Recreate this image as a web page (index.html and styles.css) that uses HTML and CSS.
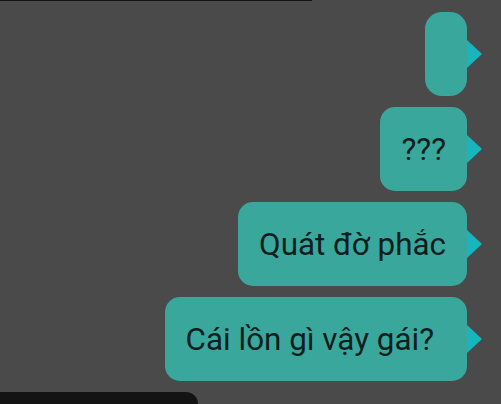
FILE: index.html
```html
<!DOCTYPE html>
<html lang="vi">
<head>
  <meta charset="UTF-8" />
  <meta name="viewport" content="width=device-width, initial-scale=1.0"/>
  <title>Chat</title>
  <link rel="stylesheet" href="styles.css">
</head>
<body>
  <div class="top-bar"></div>
  <div class="thread">
    <div class="bubble out empty"></div>
    <div class="bubble out">???</div>
    <div class="bubble out">Quát đờ phắc</div>
    <div class="bubble out wide">Cái lồn gì vậy gái?</div>
    <div class="bubble in"></div>
  </div>
</body>
</html>
```

FILE: styles.css
```css
:root {
  --bg: #4a4a4a;
  --teal: #3aa79d;
  --tail: #17b6bf;
  --ink: #0f1e1d;
  --dark: #131313;
}
*{margin:0;padding:0;box-sizing:border-box;}
html, body {height:100%; overflow:hidden;}
body {background: var(--bg); font-family: Roboto, 'Noto Sans', sans-serif;}

.top-bar {width:312px; height:1px; background: var(--dark);}

.thread {
  display:flex; flex-direction:column; align-items:flex-end; gap:11px;
  padding: 11px 34px 0 0;
}
.bubble {
  position:relative; height:84px; display:flex; align-items:center;
  padding:0 21px; border-radius:15px;
  background: var(--teal); color: var(--ink);
  font-size:31.4px; white-space:nowrap;
}
.bubble.empty {width:42px; padding:0; border-radius:17px;}
.bubble.wide {padding-right:33px;}
.bubble.out::after {
  content:''; position:absolute; left:100%; top:50%; margin-top:-14px;
  border-style:solid; border-width:14px 0 14px 15px;
  border-color: transparent transparent transparent var(--tail);
}
.bubble.in {
  align-self:flex-start; width:198px; height:12px; background: var(--dark);
  border-radius:0 15px 0 0;
}
```
